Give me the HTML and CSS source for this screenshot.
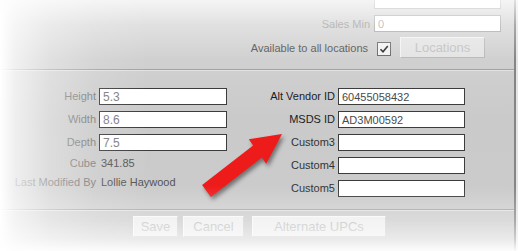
FILE: index.html
```html
<!DOCTYPE html>
<html lang="en">
<head>
    <meta charset="UTF-8">
    <title>Item Details</title>
    <link rel="stylesheet" href="styles.css">
</head>
<body>
    <div class="panel">
        <div class="top">
            <div class="row stub-row">
                <input type="text" class="field stub" disabled>
            </div>
            <div class="row sales-row">
                <label class="lbl muted">Sales Min</label>
                <input type="text" class="field disabled" value="0" disabled>
            </div>
            <div class="row avail-row">
                <span class="avail-text">Available to all locations</span>
                <span class="check">
                    <svg width="12" height="12" viewBox="0 0 12 12"><path d="M2.5 6.2 L5 8.8 L9.8 3" fill="none" stroke="#2a2a2a" stroke-width="1.6"/></svg>
                </span>
                <button class="btn btn-loc" disabled>Locations</button>
            </div>
        </div>

        <div class="mid">
            <div class="col col-left">
                <label class="lbl gray">Height</label>
                <input type="text" class="field val-gray" value="5.3">
                <label class="lbl gray">Width</label>
                <input type="text" class="field val-gray" value="8.6">
                <label class="lbl gray">Depth</label>
                <input type="text" class="field val-gray" value="7.5">
                <label class="lbl gray text-row">Cube</label>
                <span class="value text-row">341.85</span>
                <label class="lbl gray text-row">Last Modified By</label>
                <span class="value text-row">Lollie Haywood</span>
            </div>
            <div class="col col-right">
                <label class="lbl dark">Alt Vendor ID</label>
                <input type="text" class="field val-dark" value="60455058432">
                <label class="lbl dark">MSDS ID</label>
                <input type="text" class="field val-dark" value="AD3M00592">
                <label class="lbl dark2">Custom3</label>
                <input type="text" class="field">
                <label class="lbl dark2">Custom4</label>
                <input type="text" class="field">
                <label class="lbl dark2">Custom5</label>
                <input type="text" class="field">
            </div>
        </div>

        <div class="actions">
            <button class="btn btn-save" disabled>Save</button>
            <button class="btn btn-cancel" disabled>Cancel</button>
            <button class="btn btn-upc" disabled>Alternate UPCs</button>
        </div>
    </div>

    <!-- callout arrow pointing at the MSDS field -->
    <svg class="arrow" width="110" height="85" viewBox="0 0 110 85">
        <polygon points="92,9 58.8,14.3 63.1,20.4 12.1,59.9 20.9,72.1 71.9,32.6 76.2,38.7" fill="#ee1b1b"/>
    </svg>

    <div class="fade"></div>
</body>
</html>
```

FILE: styles.css
```css
body {
    margin: 0;
    width: 518px;
    height: 251px;
    overflow: hidden;
    position: relative;
    background: #e4e4e4;
    font-family: "Liberation Sans", Arial, sans-serif;
    font-size: 11px;
}

.panel {
    width: 514px;
    height: 251px;
    background: linear-gradient(to bottom, #d6d6d6 0, #cacaca 120px, #cccccc 251px);
    border-right: 2px solid #858585;
}

.top {
    padding-bottom: 11px;
    border-bottom: 1px solid #a3a3a3;
    box-shadow: 0 1px 0 #e2e2e2;
}

.row {
    display: flex;
    align-items: center;
    justify-content: flex-end;
}

.stub-row {
    height: 9px;
    margin-bottom: 6px;
    padding-right: 13px;
}

.sales-row {
    height: 17px;
    margin-bottom: 5px;
    padding-right: 13px;
}

.avail-row {
    height: 21px;
    padding-right: 29px;
}

.field {
    box-sizing: border-box;
    height: 17px;
    margin: 0;
    padding: 0 3px;
    border: 1px solid #3c3c3c;
    background: #fff;
    font-family: inherit;
    font-size: 11px;
    color: #555;
    outline: none;
}

.stub-row .field,
.sales-row .field {
    width: 127px;
    border-color: #a9a9a9;
    color: #aaa;
}

.stub {
    height: 9px;
    border-top: none;
}

.lbl {
    text-align: right;
    white-space: nowrap;
}

.sales-row .lbl {
    margin-right: 4px;
}

.muted { color: #9a9a9a; }
.gray { color: #7c7c7c; }
.dark { color: #1c1c1c; }
.dark2 { color: #333; }

.avail-text {
    color: #555;
    margin-right: 9px;
}

.check {
    box-sizing: border-box;
    display: flex;
    width: 14px;
    height: 14px;
    margin-top: 3px;
    margin-right: 9px;
    border: 1px solid #6a6a6a;
    background: #f2f2f2;
}

.btn {
    box-sizing: border-box;
    height: 21px;
    margin: 0;
    padding: 0;
    font-family: inherit;
    font-size: 13px;
    color: #c2c2c2;
    background: #e4e4e4;
    border: 1px solid #f3f3f3;
    border-right-color: #b9b9b9;
    border-bottom-color: #b9b9b9;
}

.btn-loc {
    width: 85px;
}

.mid {
    display: flex;
    padding-top: 18px;
    padding-bottom: 12px;
    border-bottom: 1px solid #a3a3a3;
    box-shadow: 0 1px 0 #e2e2e2;
}

.col {
    display: grid;
    column-gap: 3px;
    row-gap: 6px;
    align-content: start;
}

.col-left {
    grid-template-columns: 96px 128px;
    grid-template-rows: 17px 17px 17px 13px 13px;
}

.col-right {
    margin-left: 3px;
    grid-template-columns: 105px 127px;
    grid-auto-rows: 17px;
}

.col .lbl {
    line-height: 17px;
}

.col-left .text-row {
    line-height: 13px;
}

.col-left .lbl.text-row {
    line-height: 13px;
}

.value {
    padding-left: 2px;
    color: #555;
    white-space: nowrap;
}

.val-gray { color: #7a7a7a; font-size: 12px; }
.val-dark { color: #4a4a4a; }

.actions {
    display: flex;
    gap: 5px;
    padding-top: 6px;
    padding-left: 133px;
}

.actions .btn {
    background: #eeeeee;
    border: 1px solid #f8f8f8;
    border-right-color: #cfcfcf;
    border-bottom-color: #cfcfcf;
    color: #bdbdbd;
}

.btn-save { width: 45px; }
.btn-cancel { width: 61px; margin-right: 3px; }
.btn-upc { width: 134px; }

.arrow {
    position: absolute;
    left: 190px;
    top: 125px;
    filter: drop-shadow(2px 3px 2px rgba(0, 0, 0, 0.45));
}

.fade {
    position: absolute;
    inset: 0;
    pointer-events: none;
    background:
        linear-gradient(to right, rgba(255,255,255,1) 0, rgba(255,255,255,0.7) 15px, rgba(255,255,255,0.35) 50px, rgba(255,255,255,0.12) 95px, rgba(255,255,255,0) 150px),
        linear-gradient(to top, rgba(255,255,255,0.95) 0, rgba(255,255,255,0.6) 12px, rgba(255,255,255,0.3) 30px, rgba(255,255,255,0) 65px),
        linear-gradient(to bottom, rgba(255,255,255,0.75) 0, rgba(255,255,255,0.3) 25px, rgba(255,255,255,0) 60px);
}
```
